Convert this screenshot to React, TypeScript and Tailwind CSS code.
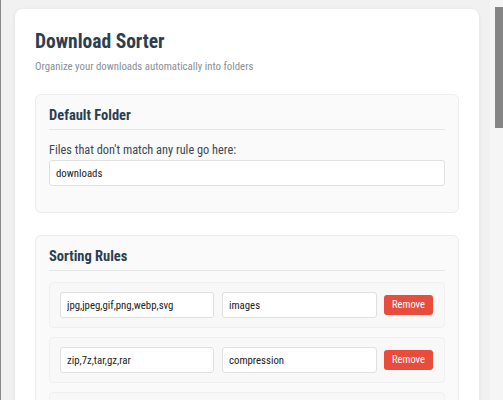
import React from "react";

const rules = [
  { ext: "jpg,jpeg,gif,png,webp,svg", folder: "images" },
  { ext: "zip,7z,tar,gz,rar", folder: "compression" },
  { ext: "pdf,doc,docx,txt", folder: "documents" },
];

function RuleRow({ ext, folder }: { ext: string; folder: string }) {
  return (
    <div className="mb-[9px] flex items-center rounded-[4px] border border-[#f0f0f0] bg-[#f8f8f8] py-[9px] pl-[10px] pr-[11px]">
      <input
        readOnly
        value={ext}
        className="h-[26px] w-[154px] rounded-[3px] border border-[#e0e0e0] bg-white px-[6px] text-[10.8px] text-[#222] outline-none"
      />
      <input
        readOnly
        value={folder}
        className="ml-[8px] h-[26px] w-[155px] rounded-[3px] border border-[#e0e0e0] bg-white px-[6px] text-[10.8px] text-[#222] outline-none"
      />
      <button className="ml-[7px] flex h-[20px] w-[49px] items-center justify-center rounded-[3px] bg-[#e74c3c] text-[10.5px] leading-none text-white">
        Remove
      </button>
    </div>
  );
}

export default function App() {
  return (
    <div className="relative min-h-screen border-l border-[#8a8a8a] bg-[#f1f1f1] font-['Roboto_Condensed',sans-serif]">
      <div className="pb-[20px] pl-[14px] pt-[9px]">
        <div className="w-[464px] rounded-[8px] bg-white px-[20px] pb-[20px] pt-[21px] shadow-[0_1px_4px_rgba(0,0,0,0.08)]">
          <h1 className="text-[19.5px] font-bold leading-[24px] text-[#2c3e50]">Download Sorter</h1>
          <p className="mt-[5px] text-[10.8px] leading-[16px] text-[#8a8f94]">
            Organize your downloads automatically into folders
          </p>

          <div className="mt-[19px] rounded-[6px] border border-[#ececec] bg-[#fafafa] px-[13px] pb-[26px] pt-[11px]">
            <h2 className="border-b border-[#e6e6e6] pb-[3px] text-[14.5px] font-bold leading-[20px] text-[#2c3e50]">
              Default Folder
            </h2>
            <label className="mt-[12px] block text-[12.3px] leading-[16px] text-[#3d4852]">
              Files that don't match any rule go here:
            </label>
            <input
              readOnly
              value="downloads"
              className="mt-[2px] block h-[26px] w-full rounded-[3px] border border-[#e0e0e0] bg-white px-[6px] text-[10.8px] text-[#222] outline-none"
            />
          </div>

          <div className="mt-[22px] rounded-[6px] border border-[#ececec] bg-[#fafafa] px-[13px] pb-[14px] pt-[11px]">
            <h2 className="border-b border-[#e6e6e6] pb-[3px] text-[14.5px] font-bold leading-[20px] text-[#2c3e50]">
              Sorting Rules
            </h2>
            <div className="mt-[11px]">
              {rules.map((r) => (
                <RuleRow key={r.ext} ext={r.ext} folder={r.folder} />
              ))}
            </div>
          </div>
        </div>
      </div>

      <div className="fixed right-0 top-0 h-screen w-[13px] bg-[#f5f5f5]">
        <div className="ml-[5px] mt-[7px] h-[121px] w-[8px] bg-[#858585]" />
      </div>
    </div>
  );
}
